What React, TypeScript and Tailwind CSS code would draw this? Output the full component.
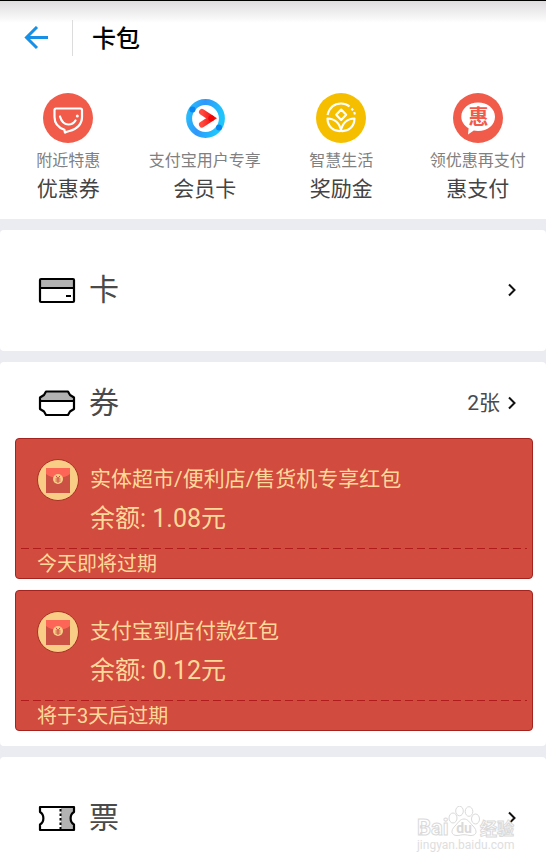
import React from 'react';

type Shortcut = {
  hint: string;
  label: string;
  icon: React.ReactNode;
};

type Coupon = {
  title: string;
  balance: string;
  expiry: string;
};

const BowlIcon: React.FC = () => (
  <svg viewBox="0 0 50 50" className="size-[50px]" fill="none" aria-hidden="true">
    <circle cx="25" cy="25" r="25" fill="#f15b4a" />
    <path
      d="M13 15.500h24.500c1 0 1.500.5 1.500 1.500v7c0 7-5 12.500-12.500 14-2 .4-3.200.700-4.500 1.700l-.6-3C15 34.500 11.500 30 11.500 24v-7c0-1 .5-1.500 1.500-1.500z"
      stroke="#fff"
      strokeWidth="2.200"
      strokeLinejoin="round"
    />
    <path d="M17 23.500c1.500 5.200 4.500 8 8.500 8 3 0 5.500-1.500 7-4" stroke="#fff" strokeWidth="2.200" strokeLinecap="round" />
    <circle cx="34.300" cy="23" r="1.500" fill="#fff" />
  </svg>
);

const MemberIcon: React.FC = () => (
  <svg viewBox="0 0 50 50" className="size-[50px]" fill="none" aria-hidden="true">
    <defs>
      <linearGradient id="ring" x1="0" y1="0" x2="1" y2="0.3">
        <stop offset="0" stopColor="#26c1fb" />
        <stop offset="0.450" stopColor="#2f97fb" />
        <stop offset="1" stopColor="#1fc4fb" />
      </linearGradient>
      <linearGradient id="arrow" x1="0" y1="0" x2="1" y2="0">
        <stop offset="0" stopColor="#ff4a40" />
        <stop offset="1" stopColor="#f51414" />
      </linearGradient>
    </defs>
    <circle cx="25.500" cy="25.500" r="16.400" stroke="url(#ring)" strokeWidth="6" />
    <circle cx="12.500" cy="16.500" r="3" fill="#0a86f0" />
    <circle cx="39" cy="34.500" r="3" fill="#0a86f0" />
    <path d="M22 19l9.500 6.300L22 31.500" stroke="url(#arrow)" strokeWidth="6" strokeLinecap="round" />
    <circle cx="31.300" cy="25.300" r="3" fill="#f00505" />
  </svg>
);

const RewardIcon: React.FC = () => (
  <svg viewBox="0 0 50 50" className="size-[50px]" fill="none" aria-hidden="true">
    <circle cx="25" cy="25" r="25" fill="#f5bf00" />
    <g stroke="#fff" strokeWidth="2.100" strokeLinejoin="round">
      <path d="M11.500 22C13.500 14.500 18.500 10.500 25 10.500c3.500 0 6.300 1.100 8.500 3" />
      <path d="M35.500 15.500l1.500 1.800M38.200 19l.7 2.500" />
      <path d="M25.200 16.500l5 5.200-5 5.200-5-5.200z" />
      <path d="M11.500 25.500c7 0 12.500 4.500 13.500 12.500-7.500.8-13.500-4.500-13.500-12.500z" />
      <path d="M38.500 25.500c-7 0-12.500 4.500-13.500 12.500 7.500.8 13.500-4.500 13.500-12.500z" />
    </g>
  </svg>
);

const PayIcon: React.FC = () => (
  <svg viewBox="0 0 50 50" className="size-[50px]" aria-hidden="true">
    <circle cx="25" cy="25" r="25" fill="#f15b4a" />
    <path d="M25 9.500c9.500 0 17 6 17 14.300S34.500 38 25 38c-1.500 0-3-.1-4.200-.4L15 41.500l.6-6.200C11.200 32.700 8.300 28.700 8.300 23.800 8.300 15.500 15.800 9.500 25 9.500z" fill="#fff" />
    <text x="25.500" y="31" textAnchor="middle" fontSize="20" fontWeight="700" fill="#f15b4a">
      惠
    </text>
  </svg>
);

const PacketIcon: React.FC = () => (
  <svg viewBox="0 0 42 42" className="size-[42px] shrink-0" aria-hidden="true">
    <circle cx="21" cy="21" r="20.500" fill="#f9cd85" stroke="#ab2f25" strokeWidth="1" />
    <rect x="9" y="9" width="24" height="25" fill="#cb5144" />
    <path d="M9 9h24v6c-2.500 2.300-7 3.800-12 3.800S11.500 17.300 9 15z" fill="#fd6656" />
    <circle cx="21" cy="20" r="5" fill="#f9cd85" />
    <path d="M19 16.800l2 2.700 2-2.700M18.500 20h5M18.500 22h5M21 19.500V24" stroke="#cb5144" strokeWidth="1" fill="none" />
  </svg>
);

const CardIcon: React.FC = () => (
  <svg viewBox="0 0 38 28" className="h-[28px] w-[38px]" fill="none" aria-hidden="true">
    <rect x="2" y="3" width="34" height="9" fill="#b2b2b2" />
    <rect x="2" y="3" width="34" height="23" rx="1" stroke="#000" strokeWidth="2.200" />
    <path d="M2 12h34M28 20h5" stroke="#000" strokeWidth="2" />
  </svg>
);

const CouponIcon: React.FC = () => (
  <svg viewBox="0 0 38 28" className="h-[28px] w-[38px]" fill="none" aria-hidden="true">
    <path d="M2 12V8.500L6 6l2-4h22l2 4 4 2.500V12z" fill="#b2b2b2" />
    <path
      d="M8 2.500h22l2 3.500 4 2.500v11.500l-4 2.500-2 3.500H8l-2-3.500-4-2.500V8.500L6 6zM2 12h34"
      stroke="#000"
      strokeWidth="2.200"
      strokeLinejoin="round"
    />
  </svg>
);

const TicketIcon: React.FC = () => (
  <svg viewBox="0 0 38 28" className="h-[28px] w-[38px]" fill="none" aria-hidden="true">
    <path d="M23 3h13v5c-4.500 2.500-4.500 10 0 12.500V26H23z" fill="#b2b2b2" />
    <path
      d="M2 3h34v5c-4.500 2.500-4.500 10 0 12.500V26H2v-5.500C6.500 18 6.500 10.500 2 8z"
      stroke="#000"
      strokeWidth="2.200"
      strokeLinejoin="round"
    />
    <path d="M22.500 5v20" stroke="#000" strokeWidth="2" strokeDasharray="2.500 2" />
  </svg>
);

const Chevron: React.FC = () => (
  <svg viewBox="0 0 10 14" className="h-[14px] w-[10px]" fill="none" aria-hidden="true">
    <path d="M2 1.500L7.500 7 2 12.500" stroke="#111" strokeWidth="2" />
  </svg>
);

const Watermark: React.FC = () => (
  <svg viewBox="0 0 100 50" className="pointer-events-none absolute right-[30px] bottom-[7px] h-[50px] w-[100px]" aria-hidden="true">
    <g fill="#fff" stroke="#dadada" strokeWidth="1">
      <text x="1" y="29" fontSize="22" fontWeight="700">
        Bai
      </text>
      <path d="M48 13c4 0 5.500 3.500 9 7 5 5 3.500 9.500-2 9.500-3 0-4-.8-7-.8s-4 .8-7 .8c-5.500 0-7-4.500-2-9.500C42.500 16.500 44 13 48 13z" />
      <ellipse cx="37" cy="12" rx="4" ry="5" />
      <ellipse cx="43.500" cy="5" rx="3.800" ry="4.800" />
      <ellipse cx="53" cy="5.500" rx="3.800" ry="4.800" />
      <ellipse cx="59.500" cy="13" rx="4" ry="5" />
      <text x="64" y="29" fontSize="17" fontWeight="700">
        经验
      </text>
    </g>
    <text x="48" y="27" textAnchor="middle" fontSize="14" fontWeight="700" fill="#dadada">
      du
    </text>
    <text x="1" y="43" fontSize="12" fill="#dedede">
      jingyan.baidu.com
    </text>
  </svg>
);

const shortcuts: Shortcut[] = [
  { hint: '附近特惠', label: '优惠券', icon: <BowlIcon /> },
  { hint: '支付宝用户专享', label: '会员卡', icon: <MemberIcon /> },
  { hint: '智慧生活', label: '奖励金', icon: <RewardIcon /> },
  { hint: '领优惠再支付', label: '惠支付', icon: <PayIcon /> },
];

const coupons: Coupon[] = [
  { title: '实体超市/便利店/售货机专享红包', balance: '余额: 1.08元', expiry: '今天即将过期' },
  { title: '支付宝到店付款红包', balance: '余额: 0.12元', expiry: '将于3天后过期' },
];

const SectionRow: React.FC<{ icon: React.ReactNode; title: string; count?: string }> = ({ icon, title, count }) => (
  <a href="#" className="flex w-full items-center pr-[29px] pl-[38px] text-[#4a4a4a]">
    {icon}
    <h2 className="ml-[13px] text-[30px] leading-[40px]">{title}</h2>
    <span className="mr-[7px] ml-auto text-[21px] leading-[28px]">{count}</span>
    <Chevron />
  </a>
);

const CouponCard: React.FC<{ coupon: Coupon }> = ({ coupon }) => (
  <article className="rounded-[4px] border border-[#a5231f] bg-[#d14b3e] text-[#ffd99a]">
    <div className="flex gap-[11px] px-[21px] pt-5">
      <PacketIcon />
      <div className="pt-[6px]">
        <h3 className="text-[21px] leading-[28px]">{coupon.title}</h3>
        <p className="mt-[10px] text-[25px] leading-[32px]">{coupon.balance}</p>
      </div>
    </div>
    <div className="mx-[5px] mt-[13px] h-px bg-[repeating-linear-gradient(90deg,#b01c1c_0_8px,transparent_8px_12px)]" />
    <p className="px-[21px] pt-[2px] text-[20px] leading-[27px]">{coupon.expiry}</p>
  </article>
);

const App: React.FC = () => {
  return (
    <div className="relative flex min-h-screen flex-col gap-[11px] overflow-hidden bg-[#ebecf1] font-[Roboto,'Noto_Sans_CJK_SC',sans-serif]">
      <div className="bg-white">
        <header className="flex h-[74px] items-center border-t border-black bg-linear-to-b from-[#dedcdf] to-white to-[22px] pl-6">
          <button type="button" aria-label="返回" className="text-[#1890e6]">
            <svg viewBox="0 0 24 24" className="size-6" fill="none" stroke="currentColor" strokeWidth="3" aria-hidden="true">
              <path d="M24 11.500H2.500M13 1L2.500 11.500 13 22" />
            </svg>
          </button>
          <h1 className="ml-6 flex h-9 items-center border-l border-[#dcdcdc] pt-[2px] pl-[19px] text-[24px] font-medium text-black">
            卡包
          </h1>
        </header>
        <nav className="grid grid-cols-4 pt-[19px] pb-[16px]">
          {shortcuts.map((item) => (
            <a key={item.label} href="#" className="flex flex-col items-center whitespace-nowrap">
              {item.icon}
              <span className="mt-[8px] text-[16px] leading-[20px] text-[#808080]">{item.hint}</span>
              <span className="mt-[4px] text-[21px] leading-[28px] text-[#444]">{item.label}</span>
            </a>
          ))}
        </nav>
      </div>

      <section className="flex h-[121px] items-center rounded-[4px] bg-white pb-[2px]">
        <SectionRow icon={<CardIcon />} title="卡" />
      </section>

      <section className="rounded-[4px] bg-white pb-[15px]">
        <div className="flex h-[76px] items-center pt-[5px]">
          <SectionRow icon={<CouponIcon />} title="券" count="2张" />
        </div>
        <div className="mr-[13px] ml-[15px] flex flex-col gap-[11px]">
          {coupons.map((coupon) => (
            <CouponCard key={coupon.title} coupon={coupon} />
          ))}
        </div>
      </section>

      <section className="flex grow items-center rounded-t-[4px] bg-white pt-[35px] pb-[20px]">
        <SectionRow icon={<TicketIcon />} title="票" />
      </section>
      <Watermark />
    </div>
  );
};

export default App;
